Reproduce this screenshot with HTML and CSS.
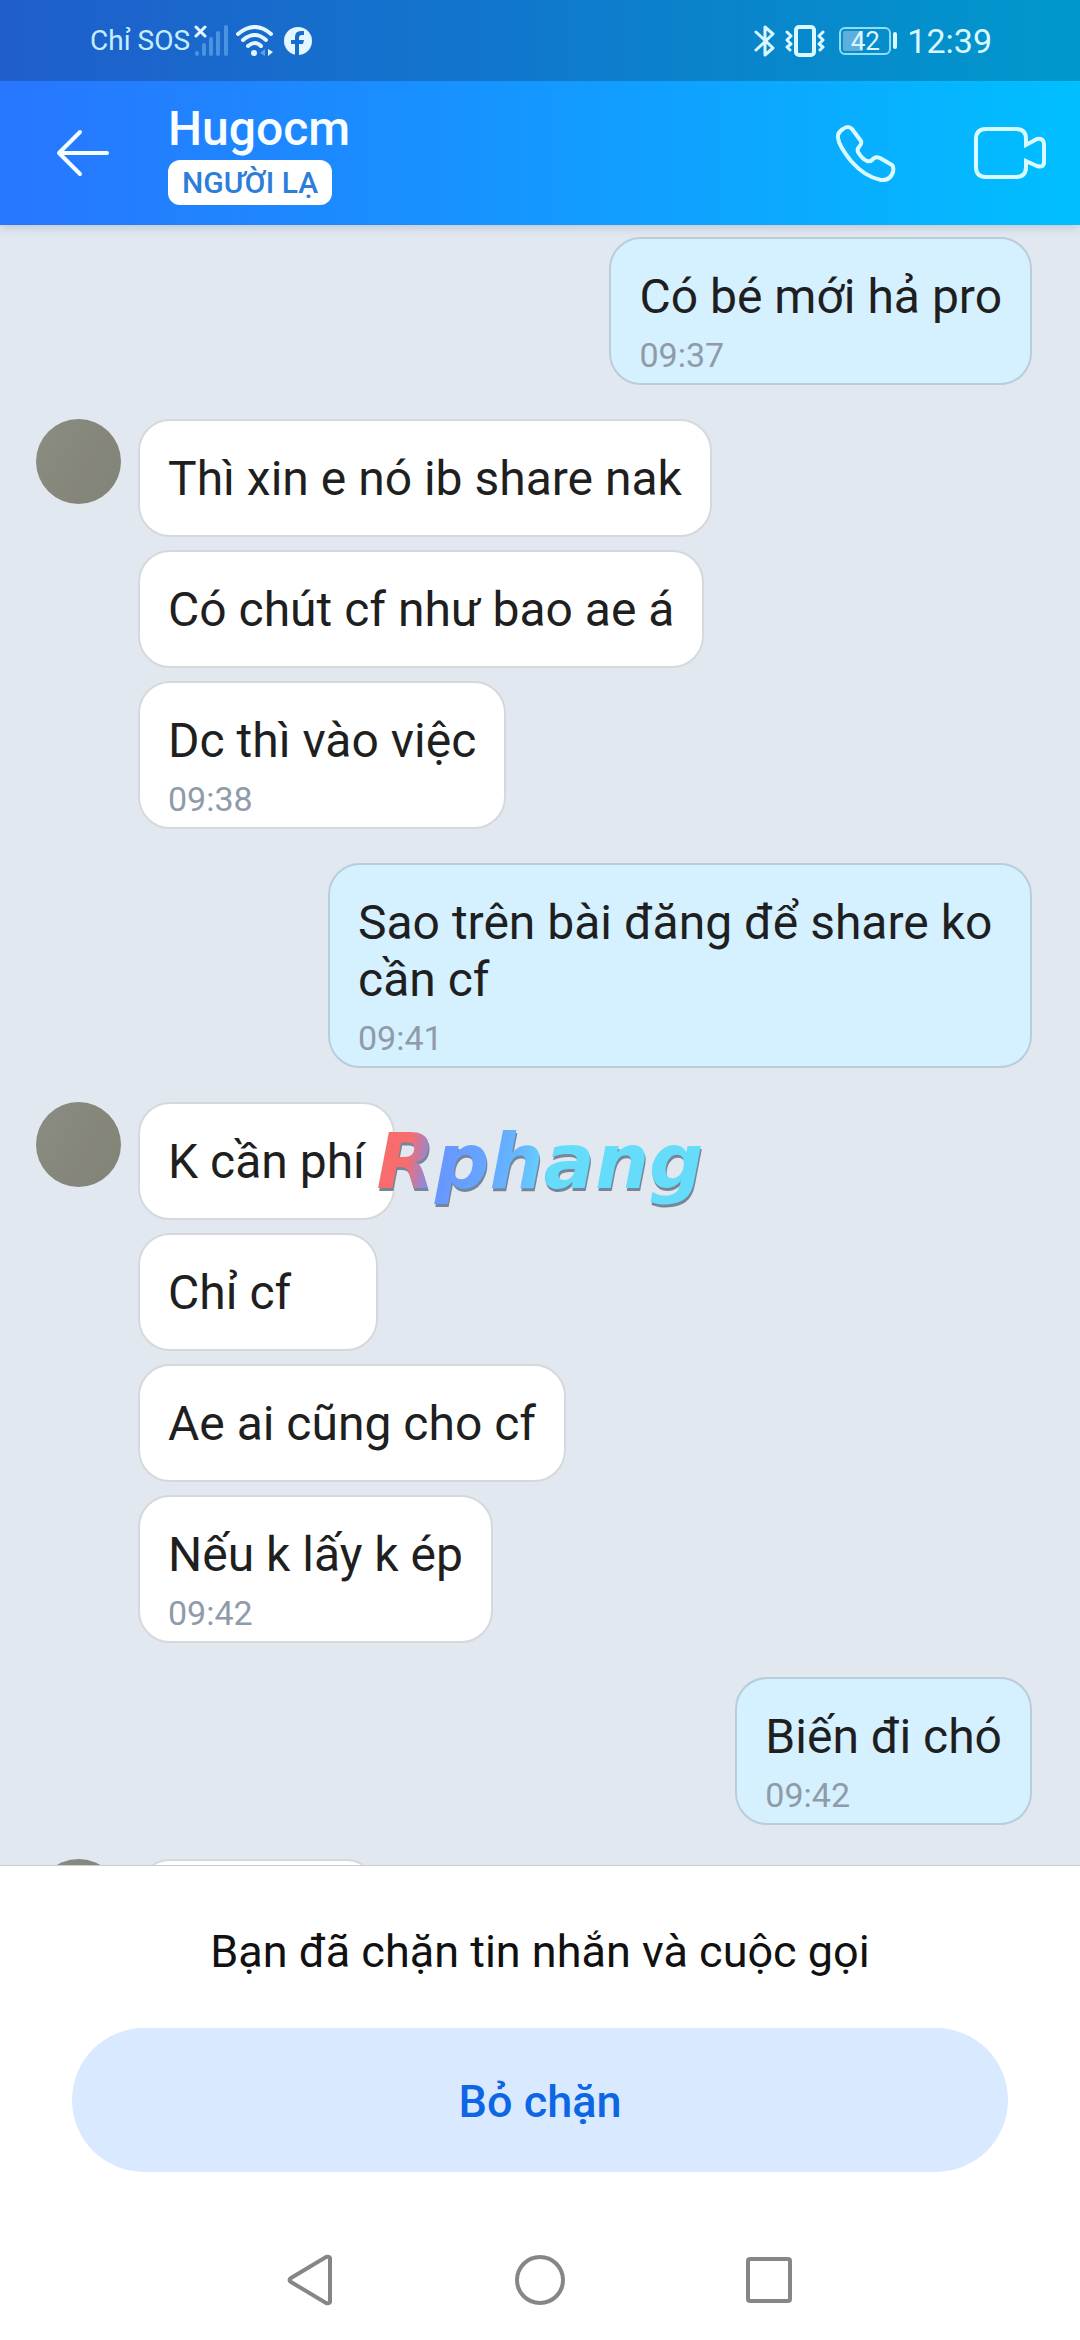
FILE: index.html
```html
<!DOCTYPE html>
<html lang="vi">
<head>
<meta charset="utf-8">
<meta name="viewport" content="width=device-width, initial-scale=1">
<title>Hugocm</title>
<link rel="stylesheet" href="styles.css">
</head>
<body>
<div class="screen">
  <div class="top">
    <div class="status">
      <span class="carrier">Chỉ SOS</span>
      <svg class="signal" width="35" height="32" viewBox="0 0 35 32" aria-hidden="true">
        <path d="M2 2l9 9M11 2l-9 9" stroke="#e4f6ff" stroke-width="3" stroke-linecap="round"/>
        <path d="M3 28v1M10 20v9M17 14v15M24 8v21M32 2v27" stroke="#4a93e2" stroke-width="4" stroke-linecap="round"/>
      </svg>
      <svg class="wifi" width="38" height="32" viewBox="0 0 38 32" fill="none" aria-hidden="true">
        <path d="M2 9Q19-5 35 9M7 15Q19 5 30 15M12 21Q19 15 25 21" stroke="#e4f6ff" stroke-width="4" stroke-linecap="round"/>
        <circle cx="18" cy="28" r="3" fill="#e4f6ff"/>
        <path d="M29 24v7l-5-3z" fill="#5a9fe6"/><path d="M32 24v7l5-4z" fill="#e4f6ff"/>
      </svg>
      <svg class="fb" width="28" height="28" viewBox="0 0 28 28" aria-hidden="true">
        <circle cx="14" cy="14" r="14" fill="#e4f6ff"/>
        <path d="M11 28V17H7v-4h4v-3q0-6 6-6h3v4h-2q-3 0-3 3v2h5l-1 4h-4v11z" fill="#186ccb"/>
      </svg>
      <span class="spacer"></span>
      <svg class="bt" width="21" height="32" viewBox="0 0 21 32" fill="none" aria-hidden="true">
        <path d="M2 7l17 16-8 7V2l8 7L2 25" stroke="#d9f8ff" stroke-width="3" stroke-linejoin="round" stroke-linecap="round"/>
      </svg>
      <svg class="vibrate" width="40" height="32" viewBox="0 0 40 32" fill="none" stroke="#d9f8ff" stroke-linejoin="round" stroke-linecap="round" aria-hidden="true">
        <rect x="11" y="2" width="18" height="28" rx="3" stroke-width="4"/>
        <path d="M2 7l4 4-4 4 4 4-4 3 3 3M38 7l-4 4 4 4-4 4 4 3-3 3" stroke-width="3"/>
      </svg>
      <span class="battery"><span class="cell">42</span></span>
      <span class="clock">12:39</span>
    </div>
    <header class="header">
      <button class="icon-btn" aria-label="Quay lại">
        <svg width="54" height="50" viewBox="0 0 54 50" fill="none" stroke="#f4fdff" stroke-width="4" stroke-linecap="round" stroke-linejoin="round"><path d="M51 25H3M24 4L3 25l21 21"/></svg>
      </button>
      <div class="who">
        <h1 class="name">Hugocm</h1>
        <span class="tag">NGƯỜI LẠ</span>
      </div>
      <button class="icon-btn" aria-label="Gọi thoại">
        <svg width="60" height="58" viewBox="0 0 60 58" fill="none" stroke="#d9fbff" stroke-width="4" stroke-linejoin="round"><path d="M7 5Q12 1 16 5L25 17Q26 20 23 23Q21 25 22 28Q26 35 31 37Q34 38 36 36Q39 32 44 34L56 41Q58 43 57 48Q54 57 45 56Q29 53 15 37Q3 22 2 14Q1 9 7 5Z"/></svg>
      </button>
      <button class="icon-btn" aria-label="Gọi video">
        <svg width="72" height="54" viewBox="0 0 72 54" fill="none" stroke="#d9fbff" stroke-width="4"><path d="M12 3H42Q52 3 52 13V19L63 13Q70 12 70 18V36Q70 42 63 40L52 35V41Q52 51 42 51H12Q2 51 2 41V13Q2 3 12 3Z"/></svg>
      </button>
    </header>
  </div>

  <main class="chat">
    <section class="group mine">
      <div class="bubble"><p>Có bé mới hả pro</p><time>09:37</time></div>
    </section>
    <section class="group">
      <span class="avatar"></span>
      <div class="stack">
        <div class="bubble"><p>Thì xin e nó ib share nak</p></div>
        <div class="bubble"><p>Có chút cf như bao ae á</p></div>
        <div class="bubble"><p>Dc thì vào việc</p><time>09:38</time></div>
      </div>
    </section>
    <section class="group mine">
      <div class="bubble"><p>Sao trên bài đăng để share ko cần cf</p><time>09:41</time></div>
    </section>
    <section class="group">
      <span class="avatar"></span>
      <div class="stack">
        <div class="bubble"><p>K cần phí</p></div>
        <div class="bubble"><p>Chỉ cf</p></div>
        <div class="bubble"><p>Ae ai cũng cho cf</p></div>
        <div class="bubble"><p>Nếu k lấy k ép</p><time>09:42</time></div>
      </div>
    </section>
    <section class="group mine">
      <div class="bubble"><p>Biến đi chó</p><time>09:42</time></div>
    </section>
    <section class="group">
      <span class="avatar"></span>
      <div class="stack"><div class="bubble"></div></div>
    </section>
  </main>

  <footer class="blocked">
    <p class="notice">Bạn đã chặn tin nhắn và cuộc gọi</p>
    <button class="unblock">Bỏ chặn</button>
  </footer>

  <nav class="nav">
    <button class="nav-btn" aria-label="Trở về"><svg width="52" height="52" viewBox="0 0 52 52"><path d="M45 4V48Q44 50 41 49L6 28Q3 26 6 24L41 3Q44 2 45 4Z"/></svg></button>
    <button class="nav-btn" aria-label="Trang chủ"><svg width="52" height="52" viewBox="0 0 52 52"><circle cx="26" cy="26" r="23"/></svg></button>
    <button class="nav-btn" aria-label="Gần đây"><svg width="52" height="52" viewBox="0 0 52 52"><rect x="5" y="5" width="42" height="42" rx="2"/></svg></button>
  </nav>
  <div class="watermark"><span>Rphang</span></div>
</div>
</body>
</html>
```

FILE: styles.css
```css
* { box-sizing: border-box; }
body {
  margin: 0;
  font-family: Roboto, "Noto Sans", sans-serif;
  color: #1f1f1f;
}
h1, p { margin: 0; font-weight: 400; }
button { border: 0; padding: 0; background: none; font: inherit; display: block; }
svg { display: block; }

.screen {
  position: relative;
  display: flex;
  flex-direction: column;
  height: 100vh;
  background: #fff;
}

/* Top area: status bar and conversation header share one gradient */
.top {
  position: relative;
  background: linear-gradient(90deg, #2876ff, #1694ff 45%, #00bfff);
  box-shadow: 0 2px 10px rgba(60, 90, 130, .25);
}
.status {
  display: flex;
  align-items: center;
  height: 81px;
  padding: 0 88px 0 90px;
  background: rgba(0, 0, 0, .2);
  color: #dff6ff;
}
.carrier { font-size: 28px; line-height: 34px; color: #c4eeff; margin-right: 4px; }
.wifi { margin-left: 7px; }
.fb { margin-left: 10px; }
.spacer { flex: 1; }
.vibrate { margin-left: 10px; }
.battery { display: flex; align-items: center; margin: 0 10px 0 14px; }
.battery::after {
  content: "";
  width: 4px;
  height: 17px;
  margin-left: 2px;
  border-radius: 2px;
  background: #d9f8ff;
}
.cell {
  width: 52px;
  height: 28px;
  border: 2px solid #8fdcf5;
  border-radius: 6px;
  background: linear-gradient(90deg, #5cb0de 45%, transparent 45%) content-box;
  padding: 2px;
  font-size: 26px;
  line-height: 20px;
  text-align: center;
}
.clock { font-size: 34px; line-height: 40px; color: #d9f8ff; }

.header {
  display: flex;
  align-items: center;
  height: 144px;
  padding: 0 34px 0 56px;
}
.who { flex: 1; padding-left: 58px; }
.name { font-size: 48px; line-height: 56px; font-weight: 500; color: #f8feff; }
.tag {
  display: block;
  width: fit-content;
  padding: 0 14px;
  margin-top: 3px;
  border-radius: 12px;
  background: #fff;
  color: #2d7ddb;
  font-size: 30px;
  line-height: 45px;
  font-weight: 500;
}
.icon-btn + .icon-btn { margin-left: 78px; }

/* Conversation */
.chat {
  flex: 1;
  min-height: 0;
  overflow: hidden;
  display: flex;
  flex-direction: column;
  gap: 34px;
  padding: 12px 48px 0 36px;
  background: #e2e8f0;
}
.group { display: flex; gap: 17px; flex: none; }
.mine { justify-content: flex-end; }
.avatar {
  width: 85px;
  height: 85px;
  border-radius: 50%;
  background: linear-gradient(120deg, #8c8d83, #858679 60%, #828479);
}
.stack { display: flex; flex-direction: column; align-items: flex-start; gap: 13px; }
.bubble {
  min-width: 240px;
  min-height: 118px;
  max-width: 704px;
  padding: 29px 28px 28px;
  border: 2px solid #d5d8dc;
  border-radius: 32px;
  background: #fff;
  font-size: 48px;
  line-height: 57px;
}
.bubble:has(time) { padding-bottom: 8px; }
.mine .bubble { background: #d5f0ff; border-color: #b9cdda; }
.bubble time {
  display: block;
  margin-top: 10px;
  font-size: 34px;
  line-height: 40px;
  color: #8f9ba8;
}

/* Blocked notice */
.blocked {
  border-top: 1px solid #c9ccd0;
  padding: 60px 72px 48px;
  text-align: center;
  background: #fff;
}
.notice { font-size: 45px; line-height: 52px; color: #111; }
.unblock {
  width: 100%;
  height: 144px;
  margin-top: 50px;
  padding-top: 2px;
  border-radius: 72px;
  background: #d9e9ff;
  color: #0d66e4;
  font-size: 45px;
  font-weight: 500;
}
.nav {
  display: flex;
  justify-content: center;
  align-items: center;
  gap: 177px;
  height: 120px;
}
.nav svg { fill: none; stroke: #868686; stroke-width: 4; }

/* Watermark over the middle of the screen */
.watermark {
  position: absolute;
  top: 50%;
  left: 50%;
  transform: translate(-50%, -50%);
  padding-bottom: 16px;
  filter: drop-shadow(1px 3px 0 #76869a);
  pointer-events: none;
}
.watermark span {
  font: italic bold 76px/88px "DejaVu Sans", sans-serif;
  color: transparent;
  background: linear-gradient(100deg, #f96c6e 11%, #6895ff 20%, #66a4ff 33%, #64b9ff 44%, #66dcfb 54%);
  -webkit-background-clip: text;
  background-clip: text;
}
```
